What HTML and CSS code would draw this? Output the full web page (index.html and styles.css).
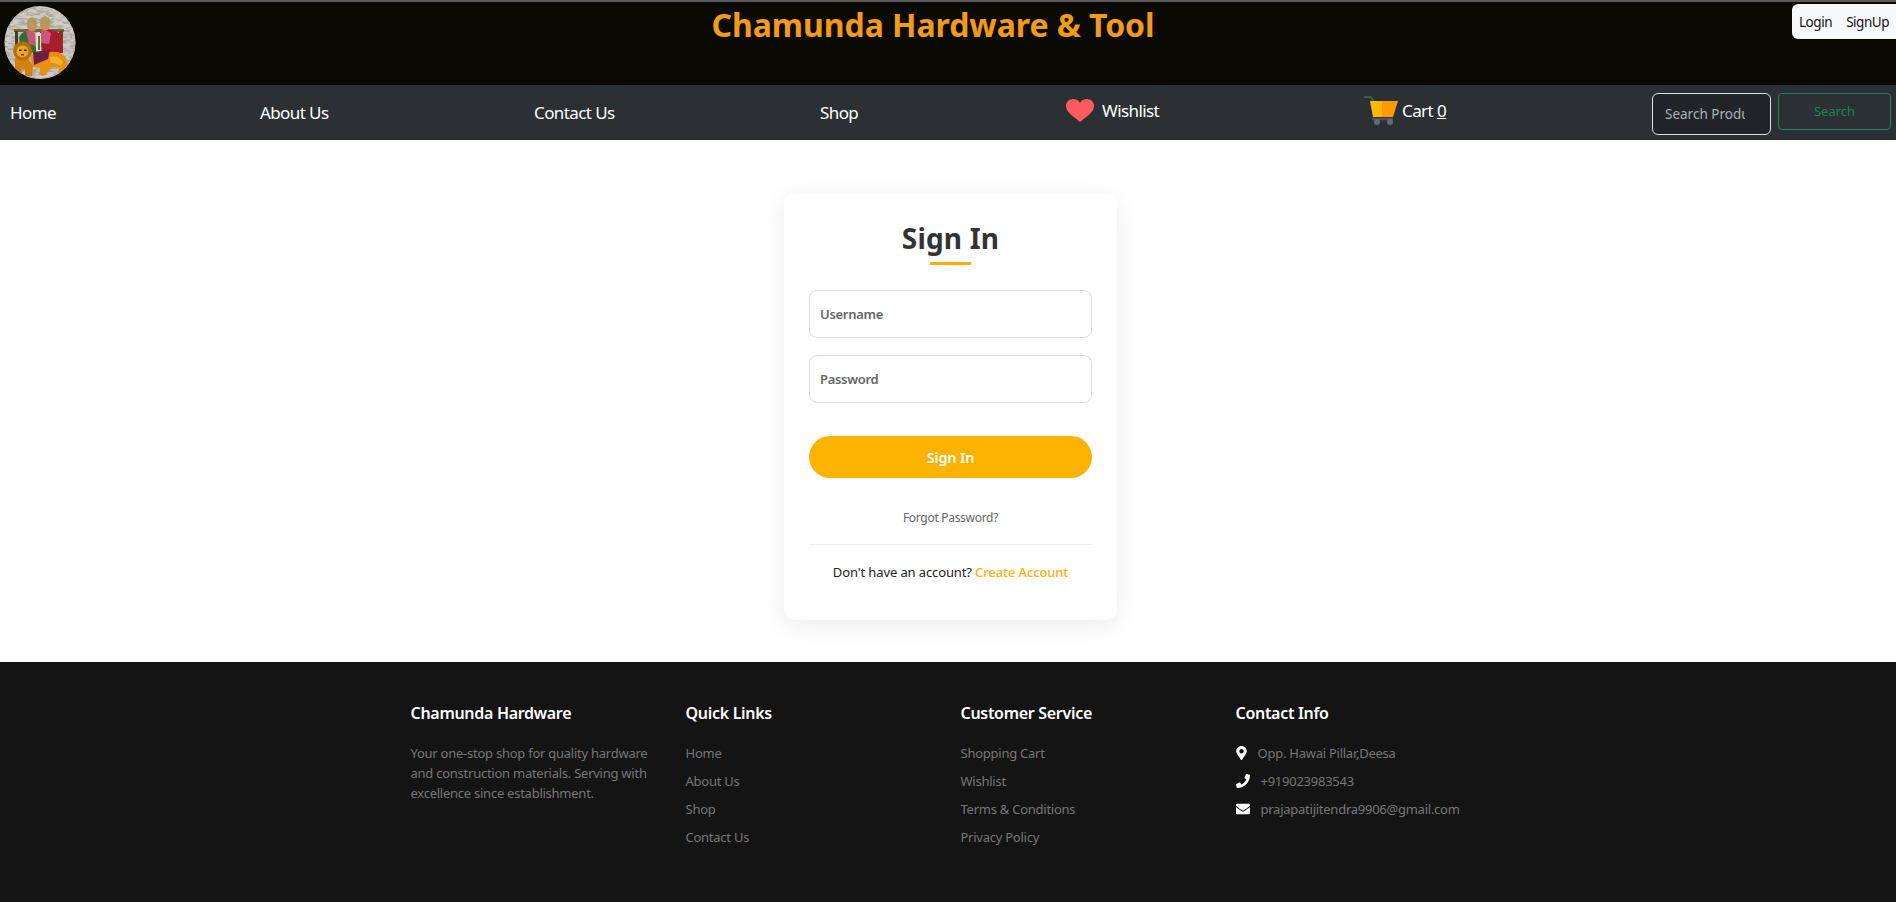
FILE: index.html
```html
<!DOCTYPE html>
<html lang="en">

<head>
    <meta charset="UTF-8">
    <meta name="viewport" content="width=device-width, initial-scale=1.0">
    <title>Chamunda Hardware & Tool - Sign In</title>
    <link rel="stylesheet" href="styles.css">
</head>

<body>
    <header class="top-header">
        <!-- shop logo, redrawn as a small picture -->
        <svg class="logo" viewBox="0 0 72 73" aria-label="Chamunda Mata">
            <defs>
                <filter id="stone" x="0" y="0" width="100%" height="100%">
                    <feTurbulence type="fractalNoise" baseFrequency="0.12 0.4" numOctaves="3" seed="7"></feTurbulence>
                    <feColorMatrix values="0 0 0 0 0.42  0 0 0 0 0.4  0 0 0 0 0.37  5 0 0 0 -2.1"></feColorMatrix>
                </filter>
                <clipPath id="round">
                    <ellipse cx="36" cy="36.5" rx="35.5" ry="36.5"></ellipse>
                </clipPath>
            </defs>
            <g clip-path="url(#round)">
                <rect width="72" height="73" fill="#cfccc6"></rect>
                <rect width="72" height="73" filter="url(#stone)"></rect>
                <!-- arch behind the figures -->
                <rect x="10" y="23" width="50" height="3" fill="#7a6238"></rect>
                <rect x="11" y="25" width="3" height="20" fill="#4a3a2a"></rect>
                <rect x="55" y="25" width="4" height="22" fill="#8a3020"></rect>
                <!-- left figure -->
                <path d="M15 31 Q19 24 28 24 L33 46 L17 48 Z" fill="#2f7038"></path>
                <path d="M22 25 Q27 24 31 27 L32 40 L25 38 Z" fill="#c9577a"></path>
                <ellipse cx="28" cy="20" rx="5" ry="5.500" fill="#c4925e"></ellipse>
                <path d="M22 18 L24 13 L28 11 L32 13 L34 18 Z" fill="#b09a5c"></path>
                <!-- right figure -->
                <path d="M36 26 Q46 21 55 27 L59 46 L38 48 Z" fill="#a81c2e"></path>
                <path d="M37 25 Q42 23 47 27 L45 38 L37 37 Z" fill="#c9577a"></path>
                <ellipse cx="41" cy="19" rx="5" ry="5.500" fill="#c4925e"></ellipse>
                <path d="M35 17 L37 12 L41 10 L45 12 L47 17 Z" fill="#b09a5c"></path>
                <rect x="32" y="27" width="5" height="20" fill="#e6dcc0"></rect>
                <rect x="34" y="30" width="2" height="14" fill="#3e7a40"></rect>
                <!-- lion body, saree on top -->
                <path d="M26 50 Q40 45 52 46 Q65 48 63 62 L60 68 L54 68 L55 61 L46 62 L42 69 L35 69 L36 62 L29 61 Z" fill="#e8900c"></path>
                <path d="M29 46 L46 44 L44 53 L30 59 Z" fill="#6e1c48"></path>
                <path d="M46 51 Q54 49 59 56 L57 60 Q50 56 46 57 Z" fill="#f6b02a"></path>
                <path d="M11 52 L24 52 L29 60 L28 70 L21 70 L21 63 L18 63 L18 70 L11 70 Z" fill="#d0820c"></path>
                <circle cx="18.500" cy="45" r="9.500" fill="#b86c0a"></circle>
                <circle cx="18.500" cy="45.500" r="6" fill="#eaa62a"></circle>
                <rect x="15" y="43.500" width="2.500" height="1.500" fill="#3a2208"></rect>
                <rect x="20" y="43.500" width="2.500" height="1.500" fill="#3a2208"></rect>
                <rect x="17" y="48" width="3" height="1.500" fill="#7a3a10"></rect>
            </g>
        </svg>
        <h1 class="site-title">Chamunda Hardware &amp; Tool</h1>
        <div class="auth-links">
            <a href="#">Login</a>
            <a href="#">SignUp</a>
        </div>
    </header>

    <nav class="main-nav">
        <a href="#" class="nav-link">Home</a>
        <a href="#" class="nav-link">About Us</a>
        <a href="#" class="nav-link">Contact Us</a>
        <a href="#" class="nav-link">Shop</a>
        <a href="#" class="nav-link nav-icon">
            <svg class="heart" viewBox="0 0 28 23">
                <path d="M14 23 C10 19 0 14 0 7 C0 3 3 0 7 0 C10 0 13 1.500 14 4 C15 1.500 18 0 21 0 C25 0 28 3 28 7 C28 14 18 19 14 23 Z" fill="#ff5a5f"></path>
            </svg>
            Wishlist
        </a>
        <a href="#" class="nav-link nav-icon cart-link">
            <svg class="cart" viewBox="0 0 34 29">
                <path d="M0 1 H7 L9 5" fill="none" stroke="#47555e" stroke-width="2"></path>
                <path d="M6 5 H18 V21 H9 Z" fill="#ffb900"></path>
                <path d="M18 5 H34 L29 21 H18 Z" fill="#ff9b00"></path>
                <path d="M8 23 H29" stroke="#47555e" stroke-width="2.500"></path>
                <circle cx="13" cy="26" r="3" fill="#5d6d78"></circle>
                <circle cx="26" cy="26" r="3" fill="#5d6d78"></circle>
            </svg>
            Cart <u>0</u>
        </a>
        <form class="search-form">
            <input type="text" class="search-input" placeholder="Search Products">
            <button type="button" class="search-btn">Search</button>
        </form>
    </nav>

    <main class="page-main">
        <div class="login-card">
            <h2>Sign In</h2>
            <input type="text" class="login-input" placeholder="Username">
            <input type="password" class="login-input" placeholder="Password">
            <button type="button" class="login-btn">Sign In</button>
            <a href="#" class="forgot">Forgot Password?</a>
            <p class="signup-line">Don't have an account? <a href="#">Create Account</a></p>
        </div>
    </main>

    <footer class="site-footer">
        <div class="footer-col">
            <h3>Chamunda Hardware</h3>
            <p>Your one-stop shop for quality hardware and construction materials. Serving with excellence since establishment.</p>
        </div>
        <div class="footer-col">
            <h3>Quick Links</h3>
            <ul>
                <li><a href="#">Home</a></li>
                <li><a href="#">About Us</a></li>
                <li><a href="#">Shop</a></li>
                <li><a href="#">Contact Us</a></li>
            </ul>
        </div>
        <div class="footer-col">
            <h3>Customer Service</h3>
            <ul>
                <li><a href="#">Shopping Cart</a></li>
                <li><a href="#">Wishlist</a></li>
                <li><a href="#">Terms &amp; Conditions</a></li>
                <li><a href="#">Privacy Policy</a></li>
            </ul>
        </div>
        <div class="footer-col">
            <h3>Contact Info</h3>
            <ul class="contact-list">
                <li>
                    <svg class="contact-icon pin" viewBox="0 0 384 512"><path d="M172.268 501.67C26.97 291.031 0 260.53 0 192 0 85.961 85.961 0 192 0s192 85.961 192 192c0 68.53-26.97 99.031-172.268 309.67-9.535 13.774-29.93 13.773-39.464 0zM192 272c44.183 0 80-35.817 80-80s-35.817-80-80-80-80 35.817-80 80 35.817 80 80 80z"></path></svg>
                    Opp. Hawai Pillar,Deesa
                </li>
                <li>
                    <svg class="contact-icon" viewBox="0 0 512 512"><path d="M493.4 24.6l-104-24c-11.3-2.6-22.9 3.3-27.5 13.9l-48 112c-4.2 9.8-1.4 21.3 6.9 28l60.6 49.6c-36 76.7-98.9 140.5-177.2 177.2l-49.6-60.6c-6.8-8.3-18.2-11.1-28-6.9l-112 48C3.9 366.5-2 378.1.6 389.4l24 104C27.1 504.2 36.7 512 48 512c256.1 0 464-207.500 464-464 0-11.2-7.7-20.9-18.6-23.4z"></path></svg>
                    +919023983543
                </li>
                <li>
                    <svg class="contact-icon" viewBox="0 0 512 512"><path d="M502.3 190.8c3.9-3.1 9.7-.2 9.7 4.7V400c0 26.5-21.5 48-48 48H48c-26.5 0-48-21.5-48-48V195.6c0-5 5.7-7.8 9.7-4.7 22.4 17.4 52.1 39.5 154.1 113.6 21.1 15.4 56.7 47.8 92.2 47.6 35.7.3 72-32.8 92.3-47.6 102-74.1 131.6-96.3 154-113.7zM256 320c23.2.4 56.6-29.2 73.4-41.4 132.7-96.3 142.8-104.7 173.4-128.7 5.8-4.5 9.2-11.5 9.2-18.9v-19c0-26.5-21.5-48-48-48H48C21.5 64 0 85.5 0 112v19c0 7.4 3.4 14.3 9.2 18.9 30.6 23.9 40.7 32.4 173.4 128.7 16.8 12.2 50.2 41.8 73.4 41.4z"></path></svg>
                    prajapatijitendra9906@gmail.com
                </li>
            </ul>
        </div>
    </footer>
</body>

</html>
```

FILE: styles.css
```css
* {
    box-sizing: border-box;
}

body {
    margin: 0;
    font-family: "Noto Sans", "Open Sans", sans-serif;
    background-color: #fff;
    overflow-x: hidden;
}

a {
    text-decoration: none;
    color: inherit;
}

/* top header */
.top-header {
    display: flex;
    align-items: flex-start;
    height: 85px;
    padding-top: 2px;
    background-color: #0a0a02;
    border-top: 2px solid #5a5a58;
}

.logo {
    width: 72px;
    height: 73px;
    margin: 2px 3px 0 4px;
    flex-shrink: 0;
}

.site-title {
    flex: 1;
    margin: 0;
    padding-right: 5px;
    text-align: center;
    font-size: 32px;
    font-weight: 700;
    line-height: 42px;
    letter-spacing: -0.05px;
    color: #f39c12;
}

.auth-links {
    display: flex;
    gap: 14px;
    width: 104px;
    height: 35px;
    margin-top: 0;
    padding: 0 7px;
    align-items: center;
    background-color: #f8f9fa;
    border-radius: 6px 0 0 6px;
    font-size: 13.5px;
    letter-spacing: -0.45px;
    color: #111;
}

/* nav bar */
.main-nav {
    display: grid;
    grid-template-columns: 250px 274px 286px 246px 298px 288px 1fr;
    align-items: center;
    height: 55px;
    padding-left: 10px;
    background-color: #2b3035;
}

.nav-link {
    font-size: 17px;
    letter-spacing: -0.6px;
    color: #fff;
}

.nav-icon {
    display: flex;
    align-items: center;
    gap: 8px;
    margin-bottom: 4px;
}

.heart {
    width: 28px;
    height: 23px;
}

.cart {
    width: 34px;
    height: 29px;
}

.cart-link {
    gap: 4px;
}

.search-form {
    display: flex;
    align-items: flex-start;
    gap: 7px;
    height: 42px;
    margin-top: 2px;
}

.search-input {
    width: 119px;
    height: 42px;
    padding: 0 25px 0 12px;
    font-family: inherit;
    font-size: 13.5px;
    color: #fff;
    background-color: #212529;
    border: 1px solid #dee2e6;
    border-radius: 6px;
}

.search-input::placeholder {
    color: #a9b1b8;
}

.search-btn {
    width: 113px;
    height: 37px;
    font-family: inherit;
    font-size: 13px;
    color: #198754;
    background: transparent;
    border: 1px solid #198754;
    border-radius: 4px;
}

/* sign in card */
.page-main {
    display: flex;
    justify-content: center;
    height: 522px;
    padding: 54px 0 0 5px;
}

.login-card {
    width: 333px;
    height: 426px;
    padding: 23px 25px 0;
    background-color: #fff;
    border-radius: 10px;
    box-shadow: 0 5px 25px rgba(0, 0, 0, 0.08);
}

.login-card h2 {
    position: relative;
    margin: 0 0 31px;
    height: 42px;
    text-align: center;
    font-size: 28px;
    font-weight: 700;
    line-height: 42px;
    letter-spacing: 0.2px;
    color: #333;
}

.login-card h2::after {
    content: "";
    position: absolute;
    left: 121px;
    bottom: -6px;
    width: 41px;
    height: 3px;
    background-color: #f9b000;
}

.login-input {
    display: block;
    width: 100%;
    height: 48px;
    margin-bottom: 17px;
    padding: 0 10px;
    font-family: inherit;
    font-size: 13px;
    font-weight: 600;
    letter-spacing: -0.3px;
    background-color: #fff;
    border: 1px solid #dcdcdc;
    border-radius: 8px;
}

.login-input::placeholder {
    color: #666;
}

.login-btn {
    display: block;
    width: 100%;
    height: 42px;
    margin-top: 33px;
    font-family: inherit;
    font-size: 14.5px;
    font-weight: 600;
    letter-spacing: -0.2px;
    color: #fff;
    background-color: #fbb300;
    border: none;
    border-radius: 25px;
}

.forgot {
    display: block;
    margin-top: 30px;
    padding-bottom: 16px;
    text-align: center;
    font-size: 12px;
    line-height: 20px;
    letter-spacing: -0.3px;
    color: #666;
    border-bottom: 1px solid #eee;
}

.signup-line {
    margin: 17px 0 0;
    text-align: center;
    font-size: 13px;
    line-height: 20px;
    letter-spacing: -0.12px;
    color: #222;
}

.signup-line a {
    font-weight: 500;
    color: #ffae0d;
}

/* footer */
.site-footer {
    display: grid;
    grid-template-columns: repeat(4, 275px);
    height: 240px;
    padding: 39px 0 0 410.5px;
    background-color: #141414;
    color: #777;
    font-size: 13px;
    letter-spacing: -0.25px;
}

.footer-col {
    padding-right: 30px;
}

.footer-col h3 {
    margin: 0 0 18px;
    font-size: 16px;
    font-weight: 600;
    line-height: 24px;
    letter-spacing: -0.3px;
    color: #fff;
}

.footer-col p {
    margin: 0;
    line-height: 20px;
}

.footer-col ul {
    margin: 0;
    padding: 0;
    list-style: none;
}

.footer-col li {
    display: flex;
    align-items: center;
    height: 28px;
    margin-top: -4px;
    margin-bottom: 4px;
}

.contact-list {
    white-space: nowrap;
}

.contact-icon {
    width: 14px;
    height: 14px;
    margin-right: 11px;
    fill: #fff;
    flex-shrink: 0;
}

.contact-icon.pin {
    width: 11px;
}
```
